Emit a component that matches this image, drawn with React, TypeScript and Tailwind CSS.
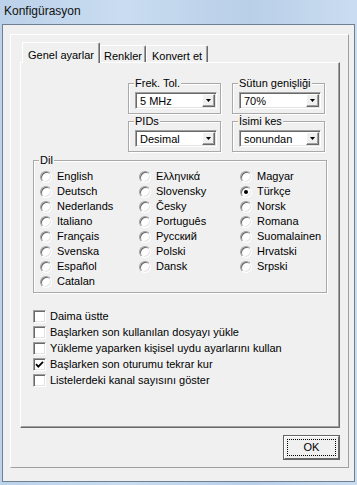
import React from 'react';

const langs = [
  ['English', 'Deutsch', 'Nederlands', 'Italiano', 'Français', 'Svenska', 'Español', 'Catalan'],
  ['Ελληνικά', 'Slovensky', 'Česky', 'Português', 'Русский', 'Polski', 'Dansk'],
  ['Magyar', 'Türkçe', 'Norsk', 'Romana', 'Suomalainen', 'Hrvatski', 'Srpski'],
];

const options = [
  { label: 'Daima üstte', checked: false },
  { label: 'Başlarken son kullanılan dosyayı yükle', checked: false },
  { label: 'Yükleme yaparken kişisel uydu ayarlarını kullan', checked: false },
  { label: 'Başlarken son oturumu tekrar kur', checked: true },
  { label: 'Listelerdeki kanal sayısını göster', checked: false },
];

function Group({ label, className, children }: { label: string; className: string; children: React.ReactNode }) {
  return (
    <div className={`relative border border-[#a9a9a9] shadow-[inset_1px_1px_0_#fff,1px_1px_0_#fff] ${className}`}>
      <span className="absolute left-[5px] -top-[7px] bg-[#f0f0f0] px-[1px] leading-[13px]">{label}</span>
      {children}
    </div>
  );
}

function Combo({ value }: { value: string }) {
  return (
    <div className="ml-[6px] mt-[8px] flex h-[17px] w-[82px] border border-t-[#a0a0a0] border-l-[#a0a0a0] border-r-white border-b-white bg-white shadow-[inset_1px_1px_0_#696969,inset_-1px_-1px_0_#e3e3e3]">
      <span className="flex-1 pl-[4px] pt-[2px] leading-[12px]">{value}</span>
      <div className="my-[1px] mr-[1px] flex w-[13px] items-center justify-center border border-t-white border-l-white border-r-[#696969] border-b-[#696969] bg-[#f0f0f0] shadow-[inset_-1px_-1px_0_#a0a0a0]">
        <svg width="5" height="3" viewBox="0 0 5 3">
          <path d="M0 0h5L2.5 3z" fill="#000" />
        </svg>
      </div>
    </div>
  );
}

function Radio({ label, checked }: { label: string; checked?: boolean }) {
  return (
    <div className="flex h-[15px] items-center gap-[5px]">
      <div className="flex h-[12px] w-[12px] items-center justify-center rounded-full border border-t-[#a0a0a0] border-l-[#a0a0a0] border-r-white border-b-white bg-white shadow-[inset_1px_1px_0_#696969,inset_-1px_-1px_0_#e3e3e3]">
        {checked && <div className="h-[4px] w-[4px] rounded-full bg-black" />}
      </div>
      <span className="leading-[13px]">{label}</span>
    </div>
  );
}

function Checkbox({ label, checked }: { label: string; checked?: boolean }) {
  return (
    <div className="flex h-[16px] items-center gap-[4px]">
      <div className="flex h-[13px] w-[13px] items-center justify-center border border-t-[#a0a0a0] border-l-[#a0a0a0] border-r-white border-b-white bg-white shadow-[inset_1px_1px_0_#696969,inset_-1px_-1px_0_#e3e3e3]">
        {checked && (
          <svg width="9" height="9" viewBox="0 0 9 9">
            <path d="M1 4.2 L3.3 6.6 L8 1.8" stroke="#000" strokeWidth="1.8" fill="none" />
          </svg>
        )}
      </div>
      <span className="leading-[13px]">{label}</span>
    </div>
  );
}

export default function App() {
  return (
    <div className="flex h-[485px] w-[357px] flex-col bg-[linear-gradient(90deg,#bcd2ea_0%,#c9dcf0_35%,#b9cfe8_70%,#cadcf0_100%)] font-['Liberation_Sans',Arial,sans-serif] text-[11px] text-black">
      {/* title bar */}
      <div className="h-[24px] pl-[4px] pt-[3px] text-[12px] leading-[16px] text-[#111]">Konfigürasyon</div>

      {/* client area */}
      <div className="mx-[2px] mb-[3px] flex flex-1 flex-col border border-[#6f8092] bg-[#f0f0f0] pl-[7px] pr-[5px] pt-[9px] pb-[13px]">
        <div className="flex flex-1 flex-col border border-t-white border-l-white border-r-[#a0a0a0] border-b-[#a0a0a0] pl-[9px] pr-[8px] pt-[7px] pb-[7px]">
          {/* tabs */}
          <div className="flex h-[20px] items-end pl-[2px]">
            <div className="relative z-10 -mb-[1px] flex h-[21px] w-[78px] justify-center rounded-t-[2px] border border-b-0 border-t-white border-l-white border-r-[#696969] bg-[#f0f0f0] pt-[4px] shadow-[inset_-1px_0_0_#a0a0a0]">
              Genel ayarlar
            </div>
            <div className="flex h-[17px] w-[46px] justify-center rounded-t-[2px] border border-b-0 border-t-white border-l-white border-r-[#696969] pt-[2px] shadow-[inset_-1px_0_0_#a0a0a0]">
              Renkler
            </div>
            <div className="flex h-[17px] w-[62px] justify-center rounded-t-[2px] border border-b-0 border-t-white border-l-white border-r-[#696969] pt-[2px] shadow-[inset_-1px_0_0_#a0a0a0]">
              Konvert et
            </div>
          </div>

          {/* tab page */}
          <div className="flex flex-1 flex-col border border-t-white border-l-white border-r-[#696969] border-b-[#696969] pt-[20px] shadow-[inset_-1px_-1px_0_#a0a0a0]">
            <div className="flex justify-end gap-[11px] pr-[14px]">
              <Group label="Frek. Tol." className="h-[31px] w-[93px]">
                <Combo value="5 MHz" />
              </Group>
              <Group label="Sütun genişliği" className="h-[31px] w-[93px]">
                <Combo value="70%" />
              </Group>
            </div>
            <div className="mt-[7px] flex justify-end gap-[11px] pr-[14px]">
              <Group label="PIDs" className="h-[31px] w-[93px]">
                <Combo value="Desimal" />
              </Group>
              <Group label="İsimi kes" className="h-[31px] w-[93px]">
                <Combo value="sonundan" />
              </Group>
            </div>

            <Group label="Dil" className="mx-[12px] mt-[8px] h-[133px]">
              <div className="flex pl-[6px] pt-[8px]">
                {langs.map((col, ci) => (
                  <div key={ci} className={ci === 0 ? 'w-[99px]' : ci === 1 ? 'w-[101px]' : 'flex-1'}>
                    {col.map((l) => (
                      <Radio key={l} label={l} checked={l === 'Türkçe'} />
                    ))}
                  </div>
                ))}
              </div>
            </Group>

            <div className="mt-[15px] pl-[12px]">
              {options.map((o) => (
                <Checkbox key={o.label} label={o.label} checked={o.checked} />
              ))}
            </div>
          </div>

          {/* buttons */}
          <div className="mt-[7px] flex justify-end">
            <div className="flex h-[25px] w-[57px] border border-[#646464]">
              <div className="flex flex-1 border border-t-white border-l-white border-r-[#696969] border-b-[#696969] bg-[#f0f0f0] p-[2px]">
                <div className="flex flex-1 items-center justify-center border border-dotted border-black">OK</div>
              </div>
            </div>
          </div>
        </div>
      </div>
    </div>
  );
}
